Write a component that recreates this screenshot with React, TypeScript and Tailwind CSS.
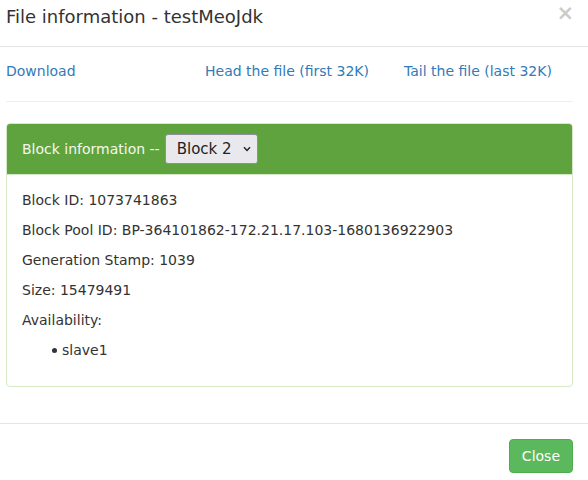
export default function App() {
  return (
    <div className="w-[588px] h-[480px] overflow-hidden bg-white text-[14px] leading-[20px] text-[#333] font-['DejaVu_Sans',sans-serif]">
      {/* Header */}
      <div className="flex items-start justify-between pl-[6px] pr-[14px] h-[47px] border-b border-[#e5e5e5]">
        <h4 className="text-[18px] leading-[26px] pt-[4px]">File information - testMeoJdk</h4>
        <button className="text-[21px] font-bold leading-[21px] text-black opacity-20 pt-[3px]">×</button>
      </div>

      {/* Body */}
      <div className="pl-[6px] pr-[15px] pt-[14px] pb-[16px]">
        <div className="grid grid-cols-3 gap-x-[30px]">
          <a className="text-[#337ab7]">Download</a>
          <a className="text-[#337ab7]">Head the file (first 32K)</a>
          <a className="text-[#337ab7]">Tail the file (last 32K)</a>
        </div>
        <hr className="mt-[20px] mb-[21px] border-t border-[#eee]" />

        <div className="border border-[#d6e9c6] rounded-[4px] mb-[20px]">
          <div className="flex items-center bg-[#5fa33e] text-[#f3f8ee] px-[15px] py-[10px] rounded-t-[3px] border-b border-[#d6e9c6]">
            <span>Block information --</span>
            <div className="relative ml-[5px]">
              <select
                defaultValue="2"
                className="appearance-none h-[30px] w-[93px] pl-[11px] pr-[20px] bg-[#e9e9ed] text-[#222] text-[15px] leading-[20px] border border-[#8f8f9d] rounded-[3px] font-['DejaVu_Sans',sans-serif]"
              >
                <option value="1">Block 1</option>
                <option value="2">Block 2</option>
              </select>
              <svg className="absolute right-[7px] top-[12px] pointer-events-none" width="8" height="6" viewBox="0 0 8 6" fill="none">
                <path d="M1 1.2 L4 4.5 L7 1.2" stroke="#222" strokeWidth="1.4" />
              </svg>
            </div>
          </div>
          <div className="pt-[15px] px-[15px] pb-[16px]">
            <p className="mb-[10px]">Block ID: 1073741863</p>
            <p className="mb-[10px]">Block Pool ID: BP-364101862-172.21.17.103-1680136922903</p>
            <p className="mb-[10px]">Generation Stamp: 1039</p>
            <p className="mb-[10px]">Size: 15479491</p>
            <p className="mb-[10px]">Availability:</p>
            <ul className="pl-[40px] mb-[10px]">
              <li className="flex items-center">
                <span className="w-[5px] h-[5px] rounded-full bg-[#333] -ml-[10px] mr-[5px]" />
                slave1
              </li>
            </ul>
          </div>
        </div>
      </div>

      {/* Footer */}
      <div className="border-t border-[#e5e5e5] pt-[15px] pr-[15px] flex justify-end">
        <button className="h-[34px] px-[12px] bg-[#5cb85c] border border-[#4cae4c] rounded-[4px] text-white">Close</button>
      </div>
    </div>
  );
}
